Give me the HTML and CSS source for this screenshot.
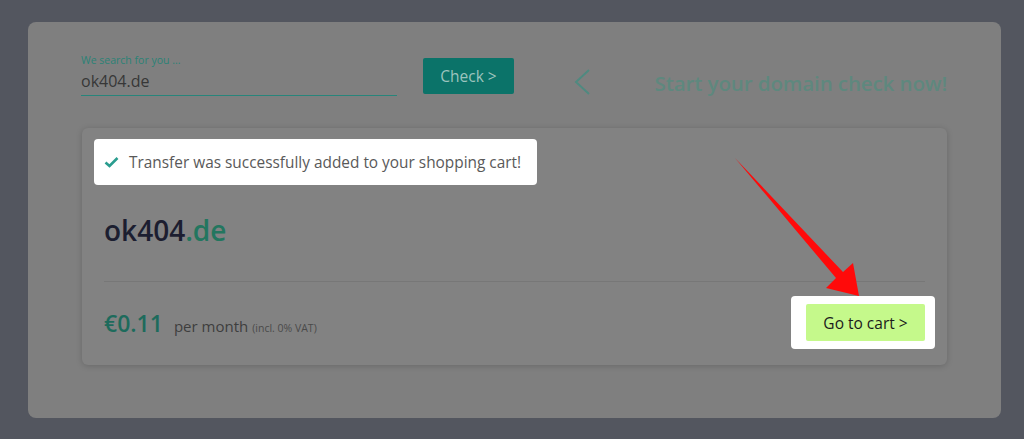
FILE: index.html
```html
<!DOCTYPE html>
<html>
<head>
    <title>Domain check</title>
    <link rel="stylesheet" href="styles.css">
</head>
<body>
    <div id="panel">
        <div id="search">
            <div class="field">
                <label for="domain">We search for you ...</label>
                <div class="input" id="domain">ok404.de</div>
            </div>
            <button class="button check">Check &gt;</button>
            <svg class="back" width="18" height="26" viewBox="0 0 18 26">
                <polyline points="16,1 3,13 16,25" fill="none" stroke="#4f8a80" stroke-width="2"/>
            </svg>
            <h2>Start your domain check now!</h2>
        </div>

        <div id="card">
            <div class="notice">
                <svg width="15" height="12" viewBox="0 0 15 12">
                    <polyline points="1.5,6.5 5.5,10 13.5,2" fill="none" stroke="#2a9d8f" stroke-width="2.6"/>
                </svg>
                <span>Transfer was successfully added to your shopping cart!</span>
            </div>
            <div class="domain">ok404<span class="tld">.de</span></div>
            <div class="price-row">
                <div class="price">
                    <span class="amount">€0.11</span>
                    <span class="period">per month</span>
                    <span class="vat">(incl. 0% VAT)</span>
                </div>
                <div class="highlight">
                    <button class="button cart">Go to cart &gt;</button>
                </div>
            </div>
        </div>
    </div>

    <svg class="arrow" width="1024" height="439" viewBox="0 0 1024 439">
        <polygon points="735,158 836,278 826,288 859,296 853,263 843,272" fill="#ff0a0a"/>
    </svg>
</body>
</html>
```

FILE: styles.css
```css
body {
    margin: 0;
    font-family: "Open Sans", Arial, sans-serif;
    background-color: #53565f;
    height: 439px;
    overflow: hidden;
}

#panel {
    margin: 22px 23px 0 28px;
    height: 396px;
    box-sizing: border-box;
    padding: 31px 54px 0 53px;
    background-color: #7f7f7f;
    border-radius: 8px;
}

#search {
    display: flex;
    align-items: flex-end;
}

.field {
    width: 316px;
}

.field label {
    display: block;
    font-size: 10.5px;
    line-height: 15px;
    color: #2b8276;
}

.input {
    font-size: 16px;
    line-height: 27px;
    color: #373737;
    border-bottom: 1px solid #27857b;
}

.button {
    font-family: "Open Sans", Arial, sans-serif;
    border: none;
    border-radius: 2px;
    cursor: pointer;
}

.button.check {
    margin: 0 0 2px 26px;
    width: 91px;
    height: 36px;
    padding: 0;
    font-size: 15.5px;
    background-color: #0b7369;
    color: #9cc4be;
}

.back {
    margin: 0 0 1px 59px;
}

h2 {
    margin: 0 0 0 auto;
    font-size: 20.5px;
    line-height: 26px;
    font-weight: 600;
    color: #5e887e;
    letter-spacing: -0.1px;
}

#card {
    margin: 32px 0 0 1px;
    padding: 11px 22px 16px 22px;
    background-color: #828282;
    border-radius: 6px;
    box-shadow: 0 1px 6px rgba(0, 0, 0, 0.18);
}

.notice {
    display: inline-flex;
    align-items: center;
    gap: 10px;
    height: 46px;
    margin-left: -10px;
    padding: 0 16px 0 10px;
    background-color: #fff;
    border-radius: 4px;
    font-size: 15.4px;
    color: #595959;
}

.domain {
    margin-top: 25px;
    font-size: 28px;
    font-weight: 600;
    line-height: 40px;
    color: #1c1e30;
}

.tld {
    color: #23765f;
}

.price-row {
    display: flex;
    justify-content: space-between;
    align-items: center;
    margin-top: 31px;
    padding-top: 14px;
    border-top: 1px solid #777;
}

.price {
    display: flex;
    align-items: baseline;
}

.amount {
    font-size: 23px;
    font-weight: 600;
    color: #1d6b5c;
}

.period {
    margin-left: 11px;
    font-size: 15px;
    color: #3e3e3e;
}

.vat {
    margin-left: 4px;
    font-size: 10.5px;
    color: #4a4a4a;
}

.highlight {
    margin-right: -10px;
    padding: 8px 10px 8px 15px;
    background-color: #fff;
    border-radius: 4px;
}

.button.cart {
    display: block;
    width: 119px;
    height: 37px;
    padding: 0;
    font-size: 15.5px;
    background-color: #c5f98b;
    color: #1b1b1b;
}

.arrow {
    position: absolute;
    left: 0;
    top: 0;
    pointer-events: none;
}
```
